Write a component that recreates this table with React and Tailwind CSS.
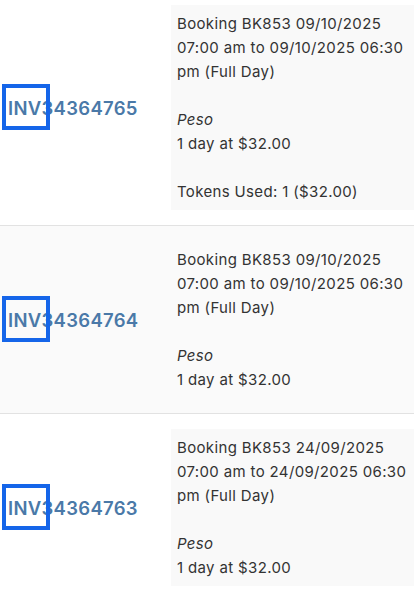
const invoices = [
  {
    id: 'INV34364765',
    date: '09/10/2025',
    tokens: 'Tokens Used: 1 ($32.00)',
  },
  {
    id: 'INV34364764',
    date: '09/10/2025',
  },
  {
    id: 'INV34364763',
    date: '24/09/2025',
  },
];

const InvoiceRow = ({ invoice, striped }) => (
  <div
    className={`grid grid-cols-[171px_1fr] border-t border-[#e2e2e2] first:border-t-0 ${
      striped ? 'bg-[#fafafa]' : 'bg-white'
    }`}
  >
    {/* Invoice number */}
    <div className="flex items-center px-2">
      <span className="relative text-[18.5px] leading-[28px] font-semibold tracking-[0.3px] text-[#4a79a8]">
        {invoice.id}
        <span className="absolute left-[-6px] top-[-10px] h-[46px] w-[48px] border-4 border-[#1565e9]" />
      </span>
    </div>

    {/* Description */}
    <div className="py-[15px]">
      <div
        className={`px-[6px] pt-[7px] pb-[6px] text-[15px] leading-6 tracking-[0.35px] text-[#333] ${
          striped ? 'bg-[#fafafa]' : 'bg-[#f9f9f9]'
        }`}
      >
        Booking BK853 {invoice.date} 07:00 am to {invoice.date} 06:30 pm (Full Day)
        <br />
        <br />
        <i>Peso</i>
        <br />
        1 day at $32.00
        <br />
        {invoice.tokens && (
          <>
            <br />
            {invoice.tokens}
          </>
        )}
      </div>
    </div>
  </div>
);

const App = () => {
  return (
    <div
      className="min-h-screen overflow-hidden bg-white"
      style={{ fontFamily: 'Inter, "Noto Sans", sans-serif' }}
    >
      <div className="-mt-[10px]">
        {invoices.map((invoice, i) => (
          <InvoiceRow key={invoice.id} invoice={invoice} striped={i % 2 === 1} />
        ))}
      </div>
    </div>
  );
};

export default App;
